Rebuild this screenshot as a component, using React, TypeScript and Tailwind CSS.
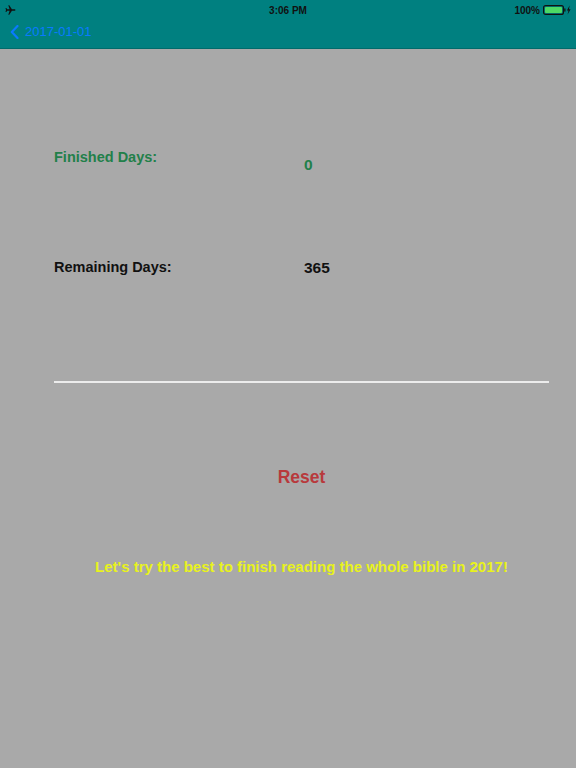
import React from "react";

function Airplane() {
  return (
    <svg width="11" height="10" viewBox="0 0 22 20" className="block">
      <path
        d="M21 10c0-1-1-1.6-2-1.6h-5.2L8.6 0.5H6.6l2.6 7.9H4.4L2.6 5.8H1l1 4.2-1 4.2h1.6l1.8-2.6h4.8l-2.6 7.9h2l5.2-7.9H19c1 0 2-.6 2-1.6z"
        fill="#111"
      />
    </svg>
  );
}

function Battery() {
  return (
    <svg width="28" height="10" viewBox="0 0 28 10" className="block">
      <rect x="0.6" y="0.6" width="19.8" height="8.8" rx="2" fill="none" stroke="#111" strokeWidth="1.2" />
      <rect x="2" y="2" width="17" height="6" rx="1" fill="#4cd964" />
      <rect x="21.2" y="3.3" width="1.3" height="3.4" rx="0.6" fill="#111" />
      <path d="M26.6 0.6 L23.9 5.4 H25.5 L24.6 9.4 L27.6 4.3 H26 Z" fill="#111" />
    </svg>
  );
}

export default function App() {
  return (
    <div
      className="w-[576px] h-[768px] bg-[#a9a9a9] flex flex-col overflow-hidden"
      style={{ fontFamily: '"Liberation Sans", Arial, sans-serif' }}
    >
      {/* Header */}
      <div className="bg-[#008080] border-b border-[#006b6b]">
        {/* Status bar */}
        <div className="h-[20px] flex items-center justify-between pl-[5px] pr-[5px] relative">
          <Airplane />
          <span className="absolute left-1/2 -translate-x-1/2 text-[10px] font-bold text-[#111]">
            3:06 PM
          </span>
          <div className="flex items-center gap-[3px]">
            <span className="text-[10px] font-bold text-[#111]">100%</span>
            <Battery />
          </div>
        </div>
        {/* Nav bar */}
        <div className="h-[28px] flex items-center pl-[10px] gap-[6px] pb-[4px]">
          <svg width="9" height="14" viewBox="0 0 9 14" className="block">
            <path d="M7.5 1 L1.8 7 L7.5 13" fill="none" stroke="#0a7aff" strokeWidth="2.2" strokeLinecap="round" strokeLinejoin="round" />
          </svg>
          <span className="text-[13px] text-[#0a7aff]">2017-01-01</span>
        </div>
      </div>

      {/* Content */}
      <div className="flex flex-col pl-[54px] pr-[27px] pt-[100px]">
        <div className="grid grid-cols-[250px_1fr] items-start font-bold text-[#22804a] leading-[17px]">
          <span className="text-[14.5px]">Finished Days:</span>
          <span className="text-[15.5px] mt-[7px]">0</span>
        </div>
        <div className="grid grid-cols-[250px_1fr] items-start font-bold text-[#111] leading-[17px] mt-[86px]">
          <span className="text-[14.5px]">Remaining Days:</span>
          <span className="text-[15.5px]">365</span>
        </div>
        <div className="h-[2px] bg-[#ececec] mt-[105px]" />
        <div className="flex justify-center mt-[84px]">
          <button className="text-[17.5px] font-bold text-[#b8393c] leading-[20px]">Reset</button>
        </div>
        <p className="text-center text-[15px] font-bold text-[#e8f21c] leading-[17px] mt-[71px]">
          Let's try the best to finish reading the whole bible in 2017!
        </p>
      </div>
    </div>
  );
}
